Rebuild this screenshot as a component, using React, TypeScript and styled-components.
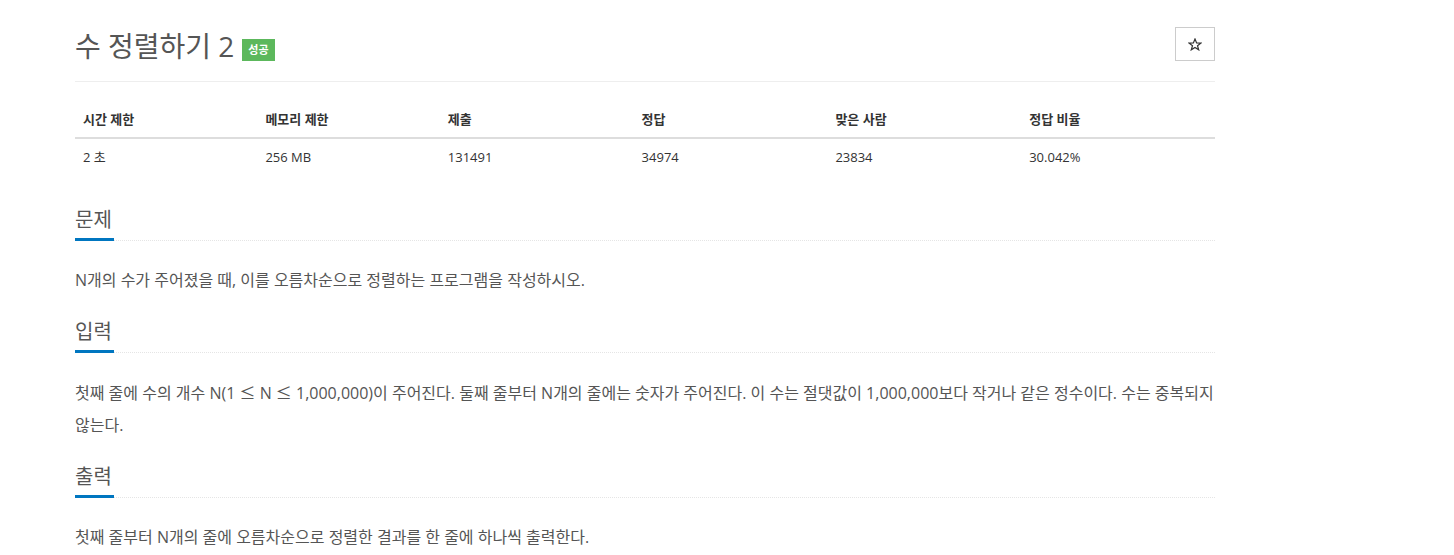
import React from 'react';
import styled, { createGlobalStyle } from 'styled-components';

const GlobalStyle = createGlobalStyle`
	body {
		margin: 0;
		background: #fff;
		font-family: "Open Sans", "Noto Sans CJK KR", sans-serif;
		color: #555;
	}
`;

const stats = [
	{ label: '시간 제한', value: '2 초', width: '16%' },
	{ label: '메모리 제한', value: '256 MB', width: '16%' },
	{ label: '제출', value: '131491', width: '17%' },
	{ label: '정답', value: '34974', width: '17%' },
	{ label: '맞은 사람', value: '23834', width: '17%' },
	{ label: '정답 비율', value: '30.042%', width: '17%' },
];

const App = () => {
	return (
		<Page>
			<GlobalStyle />
			<Container>
				<PageHeader>
					<Title>
						수 정렬하기 2 <Badge>성공</Badge>
					</Title>
					<StarButton aria-label="즐겨찾기">
						<svg width="14" height="13" viewBox="0 0 14 13">
							<path
								d="M7 1 L8.6 5 L12.8 5.1 L9.5 7.7 L10.7 11.8 L7 9.4 L3.3 11.8 L4.5 7.7 L1.2 5.1 L5.4 5 Z"
								fill="none"
								stroke="#333"
								strokeWidth="1.2"
								strokeLinejoin="miter"
							/>
						</svg>
					</StarButton>
				</PageHeader>

				<StatTable>
					<thead>
						<tr>
							{stats.map((s) => (
								<Th key={s.label} $width={s.width}>{s.label}</Th>
							))}
						</tr>
					</thead>
					<tbody>
						<tr>
							{stats.map((s) => (
								<Td key={s.label}>{s.value}</Td>
							))}
						</tr>
					</tbody>
				</StatTable>

				<Section>
					<Headline>
						<HeadlineText>문제</HeadlineText>
					</Headline>
					<Body>N개의 수가 주어졌을 때, 이를 오름차순으로 정렬하는 프로그램을 작성하시오.</Body>
				</Section>

				<Section>
					<Headline>
						<HeadlineText>입력</HeadlineText>
					</Headline>
					<Body>
						첫째 줄에 수의 개수 N(1 <MathSym>≤</MathSym> N <MathSym>≤</MathSym> 1,000,000)이 주어진다. 둘째 줄부터 N개의 줄에는 숫자가 주어진다. 이 수는 절댓값이 1,000,000보다 작거나 같은 정수이다. 수는 중복되지 않는다.
					</Body>
				</Section>

				<Section>
					<Headline>
						<HeadlineText>출력</HeadlineText>
					</Headline>
					<Body>첫째 줄부터 N개의 줄에 오름차순으로 정렬한 결과를 한 줄에 하나씩 출력한다.</Body>
				</Section>
			</Container>
		</Page>
	);
};

export default App;

const Page = styled.div`
	padding: 0 60px;
`;

const Container = styled.div`
	width: 1140px;
	padding: 0 15px;
`;

const PageHeader = styled.div`
	display: flex;
	justify-content: space-between;
	align-items: flex-start;
	padding: 27px 0 0;
	height: 54px;
	border-bottom: 1px solid #eee;
`;

const Title = styled.h1`
	margin: 1px 0 0;
	font-size: 28px;
	font-weight: 400;
	line-height: 36px;
	color: #555;
	display: flex;
	align-items: center;
	gap: 8px;
`;

const Badge = styled.span`
	display: inline-block;
	background: #5cb85c;
	color: #fff;
	font-size: 11px;
	font-weight: 700;
	line-height: 14px;
	padding: 4px 6px;
	margin-top: 8px;
`;

const StarButton = styled.button`
	display: flex;
	align-items: center;
	justify-content: center;
	width: 40px;
	height: 34px;
	border: 1px solid #ccc;
	background: #fff;
	padding: 0;
	cursor: pointer;
`;

const StatTable = styled.table`
	width: 100%;
	margin: 19px 0 0;
	border-collapse: collapse;
	font-size: 13px;
	color: #333;
`;

const Th = styled.th<{ $width: string }>`
	width: ${(p) => p.$width};
	text-align: left;
	font-weight: 700;
	padding: 8px;
	line-height: 20px;
	border-bottom: 2px solid #ddd;
`;

const Td = styled.td`
	padding: 8px;
	line-height: 20px;
`;

const Section = styled.section`
	margin-top: 30px;

	& + & {
		margin-top: 21px;
	}
`;

const Headline = styled.h2`
	margin: 0;
	font-size: 20px;
	font-weight: 400;
	line-height: 30px;
	border-bottom: 1px dotted #e5e5e5;
	color: #555;
`;

const HeadlineText = styled.span`
	display: inline-block;
	border-bottom: 3px solid #0076c0;
	padding: 0 2px 3px 0;
	margin-bottom: -1px;
`;

const Body = styled.p`
	margin: 23px 0 0;
	font-size: 16px;
	line-height: 32px;
	color: #555;
`;

const MathSym = styled.span`
	font-family: "Noto Sans CJK KR", sans-serif;
`;
